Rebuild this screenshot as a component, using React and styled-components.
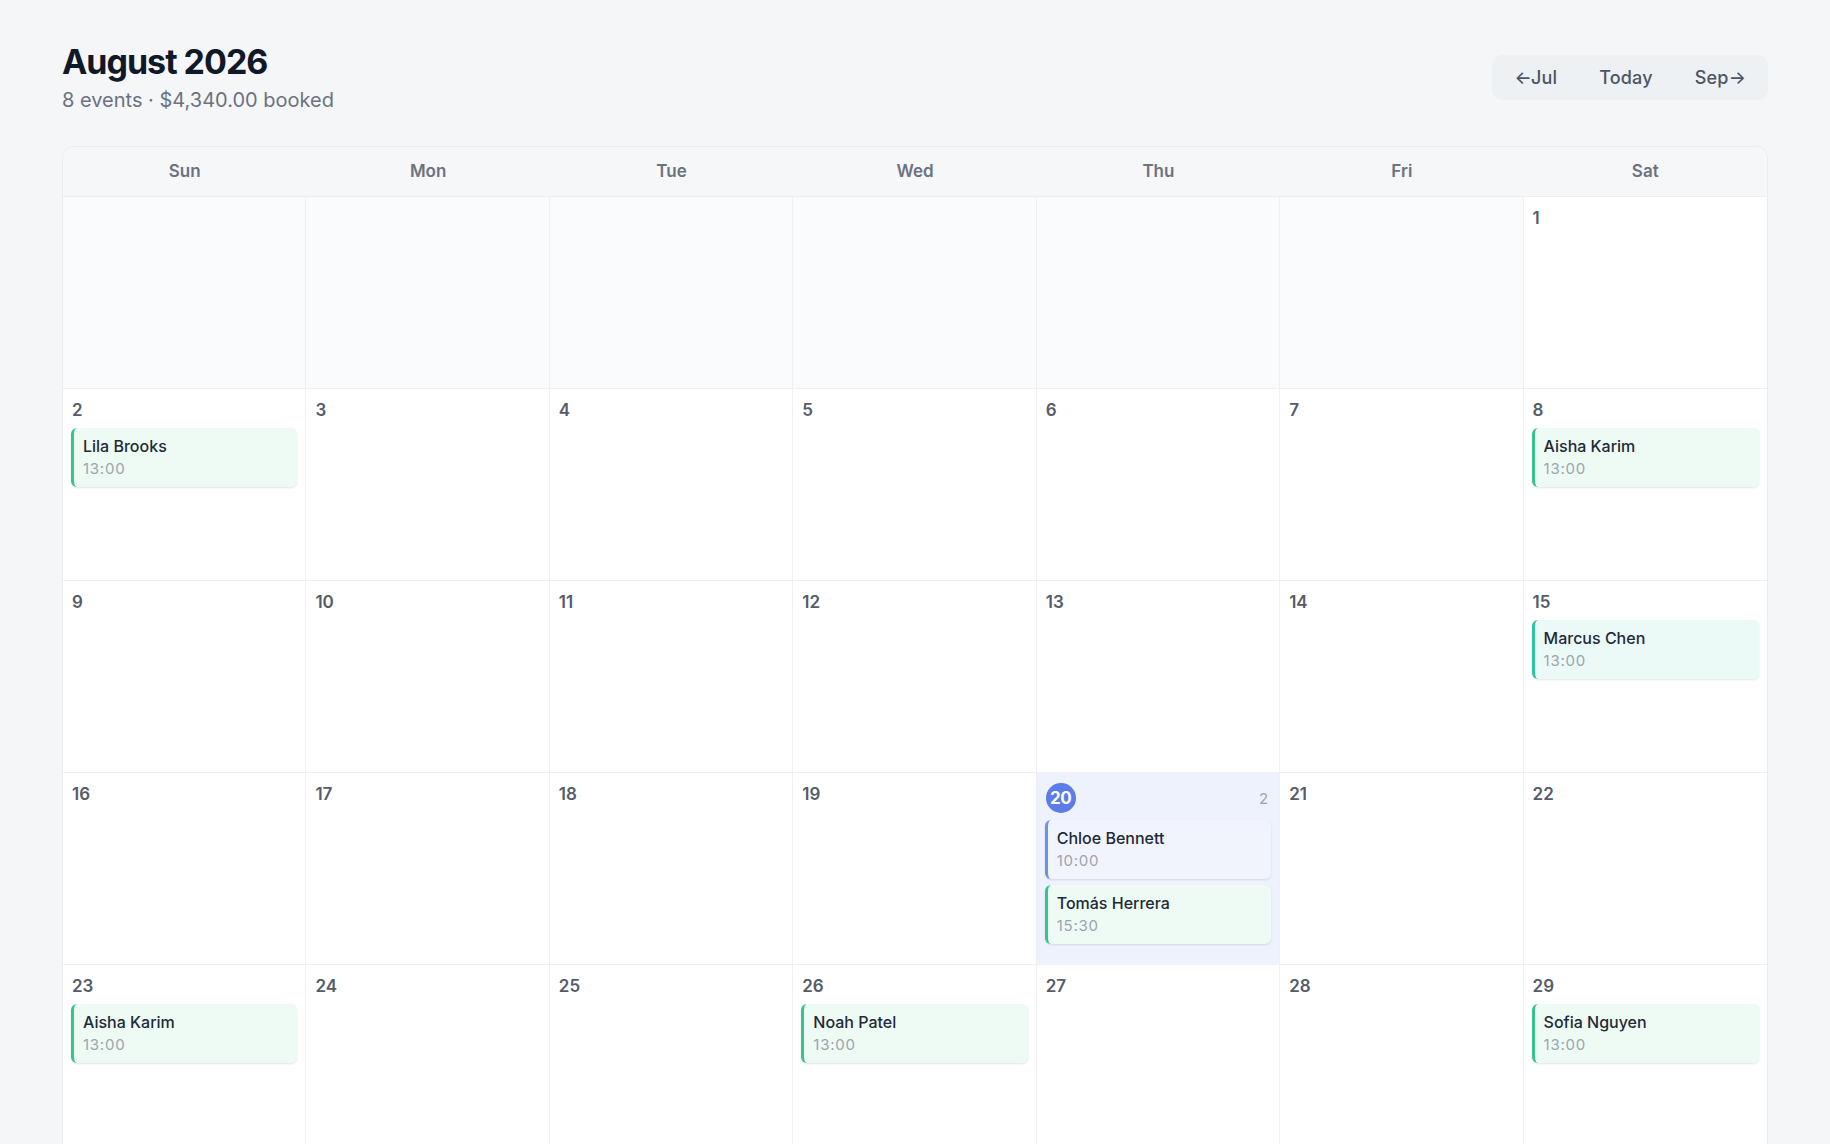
import React from "react";
import styled, { createGlobalStyle, css } from "styled-components";

const GlobalStyle = createGlobalStyle`
  html, body {
    margin: 0;
    padding: 0;
    background: #f4f6f8;
    font-family: Inter, "Noto Sans", "Liberation Sans", sans-serif;
    -webkit-font-smoothing: antialiased;
  }
  * { box-sizing: border-box; }
`;

const Page = styled.div`
  padding: 40px 62px 40px 62px;
  display: flex;
  flex-direction: column;
  gap: 32px;
`;

const Header = styled.header`
  display: flex;
  align-items: center;
  justify-content: space-between;
`;

const TitleBlock = styled.div`
  display: flex;
  flex-direction: column;
  gap: 2px;
`;

const Title = styled.h1`
  margin: 0;
  font-size: 34px;
  line-height: 44px;
  font-weight: 700;
  letter-spacing: -0.03em;
  color: #111827;
`;

const Subtitle = styled.div`
  font-size: 20px;
  line-height: 28px;
  color: #6b7280;
  letter-spacing: 0;
`;

const NavGroup = styled.nav`
  display: flex;
  align-items: center;
  gap: 6px;
  padding: 4px;
  background: #eef1f4;
  border-radius: 10px;
`;

const NavButton = styled.button`
  border: none;
  background: transparent;
  font-family: inherit;
  font-size: 18px;
  font-weight: 500;
  color: #4b5563;
  padding: 8px 18px;
  border-radius: 8px;
  cursor: pointer;
  line-height: 21px;
  letter-spacing: 0.01em;
`;

const Calendar = styled.section`
  background: #ffffff;
  border: 1px solid #e9ecf0;
  border-radius: 12px;
  overflow: hidden;
`;

const WeekHeader = styled.div`
  display: grid;
  grid-template-columns: repeat(7, 1fr);
  background: #f6f7f9;
  border-bottom: 1px solid #eceef2;
  height: 50px;
`;

const WeekDay = styled.div`
  display: flex;
  align-items: center;
  justify-content: center;
  font-size: 17px;
  font-weight: 600;
  color: #6b7280;
  padding-bottom: 2px;
`;

const Grid = styled.div`
  display: grid;
  grid-template-columns: repeat(7, 1fr);
  grid-auto-rows: 192px;
`;

const Cell = styled.div`
  display: flex;
  flex-direction: column;
  gap: 7px;
  padding: 10px 8px;
  border-right: 1px solid #eef0f3;
  border-bottom: 1px solid #eef0f3;
  background: #ffffff;
  min-width: 0;
  &:nth-child(7n) { border-right: none; }
  ${(p) => p.$outside && css`background: #fafbfc;`}
  ${(p) => p.$today && css`background: #eef2fc;`}
`;

const CellTop = styled.div`
  display: flex;
  align-items: center;
  justify-content: space-between;
  min-height: 22px;
  padding: 0 1px;
`;

const DayNum = styled.span`
  font-size: 17px;
  line-height: 22px;
  font-weight: 600;
  color: #555c69;
`;

const TodayNum = styled.span`
  width: 30px;
  height: 30px;
  border-radius: 50%;
  background: #5b7ce9;
  color: #ffffff;
  font-size: 17px;
  font-weight: 700;
  display: flex;
  align-items: center;
  justify-content: center;
  letter-spacing: -0.02em;
`;

const Count = styled.span`
  font-size: 15px;
  color: #9ca3af;
  padding-right: 2px;
`;

const Events = styled.div`
  display: flex;
  flex-direction: column;
  gap: 6px;
`;

const tones = {
  green: { border: "#35c48e", bg: "#edfbf4" },
  teal: { border: "#2fc3a2", bg: "#ebf9f7" },
  blue: { border: "#6b93e3", bg: "#f1f4fd" },
};

const EventCard = styled.div`
  display: flex;
  flex-direction: column;
  gap: 2px;
  padding: 8px 10px 8px 9px;
  border-left: 3px solid ${(p) => tones[p.$tone].border};
  background: ${(p) => tones[p.$tone].bg};
  border-radius: 6px;
  box-shadow: 0 1px 2px rgba(16, 24, 40, 0.07), 0 1px 3px rgba(16, 24, 40, 0.05);
`;

const EventName = styled.span`
  font-size: 16px;
  line-height: 21px;
  font-weight: 500;
  color: #1f2937;
  letter-spacing: 0;
  white-space: nowrap;
  overflow: hidden;
  text-overflow: ellipsis;
`;

const EventTime = styled.span`
  font-size: 15px;
  line-height: 20px;
  color: #9ca3af;
  letter-spacing: 0.05em;
`;

const weekDays = ["Sun", "Mon", "Tue", "Wed", "Thu", "Fri", "Sat"];

const events = {
  2: [{ name: "Lila Brooks", time: "13:00", tone: "green" }],
  8: [{ name: "Aisha Karim", time: "13:00", tone: "green" }],
  15: [{ name: "Marcus Chen", time: "13:00", tone: "teal" }],
  20: [
    { name: "Chloe Bennett", time: "10:00", tone: "blue" },
    { name: "Tomás Herrera", time: "15:30", tone: "green" },
  ],
  23: [{ name: "Aisha Karim", time: "13:00", tone: "green" }],
  26: [{ name: "Noah Patel", time: "13:00", tone: "green" }],
  29: [{ name: "Sofia Nguyen", time: "13:00", tone: "green" }],
};

const TODAY = 20;

function buildCells() {
  const cells = [];
  for (let i = 0; i < 6; i++) cells.push({ outside: true, key: `o${i}` });
  for (let d = 1; d <= 31; d++) cells.push({ day: d, key: `d${d}` });
  while (cells.length % 7 !== 0) cells.push({ outside: true, key: `e${cells.length}` });
  return cells;
}

export default function App() {
  const cells = buildCells();
  return (
    <>
      <GlobalStyle />
      <Page>
        <Header>
          <TitleBlock>
            <Title>August 2026</Title>
            <Subtitle>8 events · $4,340.00 booked</Subtitle>
          </TitleBlock>
          <NavGroup>
            <NavButton>←Jul</NavButton>
            <NavButton>Today</NavButton>
            <NavButton>Sep→</NavButton>
          </NavGroup>
        </Header>
        <Calendar>
          <WeekHeader>
            {weekDays.map((d) => (
              <WeekDay key={d}>{d}</WeekDay>
            ))}
          </WeekHeader>
          <Grid>
            {cells.map((c) => {
              if (c.outside) return <Cell key={c.key} $outside />;
              const list = events[c.day] || [];
              const isToday = c.day === TODAY;
              return (
                <Cell key={c.key} $today={isToday}>
                  <CellTop>
                    {isToday ? <TodayNum>{c.day}</TodayNum> : <DayNum>{c.day}</DayNum>}
                    {isToday && <Count>{list.length}</Count>}
                  </CellTop>
                  {list.length > 0 && (
                    <Events>
                      {list.map((e) => (
                        <EventCard key={e.name + e.time} $tone={e.tone}>
                          <EventName>{e.name}</EventName>
                          <EventTime>{e.time}</EventTime>
                        </EventCard>
                      ))}
                    </Events>
                  )}
                </Cell>
              );
            })}
          </Grid>
        </Calendar>
      </Page>
    </>
  );
}
